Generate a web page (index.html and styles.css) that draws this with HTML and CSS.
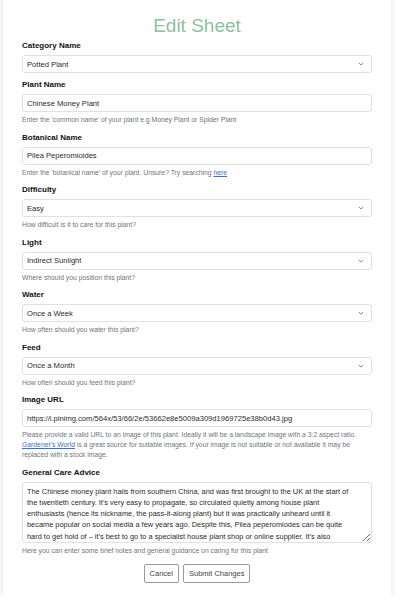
FILE: index.html
```html
<!DOCTYPE html>
<html lang="en">
<head>
<meta charset="utf-8">
<title>Edit Sheet</title>
<link rel="stylesheet" href="styles.css">
</head>
<body>
<div class="card">
  <h1 class="title">Edit Sheet</h1>
  <form class="form">
    <div class="group group-plain">
      <label class="label">Category Name</label>
      <div class="select-wrap">
        <select class="control"><option>Potted Plant</option></select>
        <svg class="chev" viewBox="0 0 8 5" width="6" height="4"><path d="M1 1l3 3 3-3" fill="none" stroke="#6a6a6a" stroke-width="1.1"/></svg>
      </div>
    </div>
    <div class="group">
      <label class="label">Plant Name</label>
      <input class="control" value="Chinese Money Plant">
      <p class="help">Enter the 'common name' of your plant e.g Money Plant or Spider Plant</p>
    </div>
    <div class="group">
      <label class="label">Botanical Name</label>
      <input class="control" value="Pilea Peperomioides">
      <p class="help">Enter the 'botanical name' of your plant. Unsure? Try searching <a class="link" href="#">here</a></p>
    </div>
    <div class="group">
      <label class="label">Difficulty</label>
      <div class="select-wrap">
        <select class="control"><option>Easy</option></select>
        <svg class="chev" viewBox="0 0 8 5" width="6" height="4"><path d="M1 1l3 3 3-3" fill="none" stroke="#6a6a6a" stroke-width="1.1"/></svg>
      </div>
      <p class="help">How difficult is it to care for this plant?</p>
    </div>
    <div class="group">
      <label class="label">Light</label>
      <div class="select-wrap">
        <select class="control"><option>Indirect Sunlight</option></select>
        <svg class="chev" viewBox="0 0 8 5" width="6" height="4"><path d="M1 1l3 3 3-3" fill="none" stroke="#6a6a6a" stroke-width="1.1"/></svg>
      </div>
      <p class="help">Where should you position this plant?</p>
    </div>
    <div class="group">
      <label class="label">Water</label>
      <div class="select-wrap">
        <select class="control"><option>Once a Week</option></select>
        <svg class="chev" viewBox="0 0 8 5" width="6" height="4"><path d="M1 1l3 3 3-3" fill="none" stroke="#6a6a6a" stroke-width="1.1"/></svg>
      </div>
      <p class="help">How often should you water this plant?</p>
    </div>
    <div class="group">
      <label class="label">Feed</label>
      <div class="select-wrap">
        <select class="control"><option>Once a Month</option></select>
        <svg class="chev" viewBox="0 0 8 5" width="6" height="4"><path d="M1 1l3 3 3-3" fill="none" stroke="#6a6a6a" stroke-width="1.1"/></svg>
      </div>
      <p class="help">How often should you feed this plant?</p>
    </div>
    <div class="group">
      <label class="label">Image URL</label>
      <input class="control" value="https://i.pinimg.com/564x/53/66/2e/53662e8e5009a309d1969725e38b0d43.jpg">
      <p class="help">Please provide a valid URL to an image of this plant. Ideally it will be a landscape image with a 3:2 aspect ratio.<br><a class="link" href="#">Gardener's World</a> is a great source for suitable images. If your image is not suitable or not available it may be<br>replaced with a stock image.</p>
    </div>
    <div class="group">
      <label class="label">General Care Advice</label>
      <textarea class="control area" wrap="off">The Chinese money plant hails from southern China, and was first brought to the UK at the start of
the twentieth century. It’s very easy to propagate, so circulated quietly among house plant
enthusiasts (hence its nickname, the pass-it-along plant) but it was practically unheard until it
became popular on social media a few years ago. Despite this, Pilea peperomiodes can be quite
hard to get hold of – it’s best to go to a specialist house plant shop or online supplier. It’s also
worth knowing that it is an easy plant to look after, thriving in bright indirect light.</textarea>
      <p class="help">Here you can enter some brief notes and general guidance on caring for this plant</p>
    </div>
    <div class="actions">
      <button type="button" class="btn">Cancel</button>
      <button type="button" class="btn">Submit Changes</button>
    </div>
  </form>
</div>
</body>
</html>
```
FILE: styles.css
```css
html, body {
  margin: 0;
  padding: 0;
  background: #ffffff;
}
body {
  font-family: "Liberation Sans", Arial, sans-serif;
  color: #212529;
}
.card {
  width: 350px;
  margin: -10px 0 0 3px;
  padding: 24px 19px 13px;
  background: #ffffff;
  box-shadow: 0 0 7px rgba(0, 0, 0, 0.13);
}
.title {
  margin: 0 0 3px;
  font-size: 19px;
  line-height: 24px;
  font-weight: normal;
  text-align: center;
  color: #8fbfa0;
}
.form {
  display: flex;
  flex-direction: column;
}
.group {
  display: flex;
  flex-direction: column;
  margin-bottom: 7.5px;
}
.group-plain {
  margin-bottom: 7px;
}
.label {
  display: block;
  font-size: 8px;
  line-height: 10px;
  font-weight: bold;
  color: #111111;
  margin-bottom: 4px;
}
.control {
  display: block;
  box-sizing: border-box;
  width: 350px;
  height: 18px;
  margin: 0;
  padding: 0 4px;
  border: 1px solid #dfe1e4;
  border-radius: 3px;
  background: #ffffff;
  font-family: "Liberation Sans", Arial, sans-serif;
  font-size: 7.6px;
  color: #2a2a2a;
  outline: none;
}
.select-wrap {
  position: relative;
}
select.control {
  -webkit-appearance: none;
  appearance: none;
}
.chev {
  position: absolute;
  right: 8px;
  top: 7px;
}
.area {
  height: 61px;
  padding: 3px 4px;
  line-height: 11.3px;
  font-size: 7.4px;
  overflow: hidden;
  resize: vertical;
  white-space: pre;
}
.help {
  margin: 3px 0 0;
  font-size: 6.8px;
  line-height: 10px;
  color: #6f757b;
}
.link {
  color: #3471d8;
  text-decoration: underline;
}
.actions {
  display: flex;
  justify-content: center;
  gap: 4px;
  margin-top: 1px;
}
.btn {
  height: 19px;
  padding: 0 5px;
  border: 1px solid #9a9a9a;
  border-radius: 2px;
  background: #ffffff;
  font-family: "Liberation Sans", Arial, sans-serif;
  font-size: 7.5px;
  color: #444444;
}
```
